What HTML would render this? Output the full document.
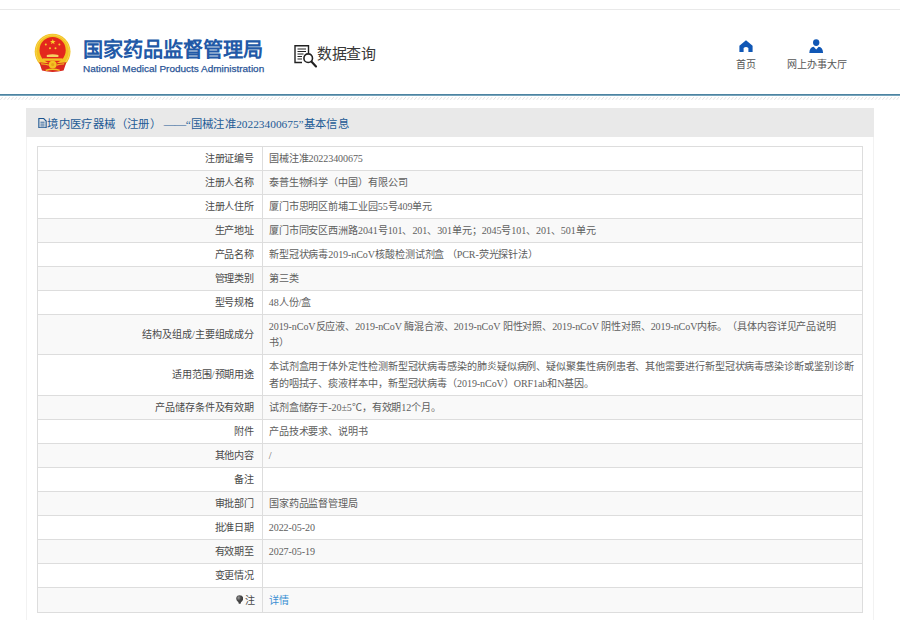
<!DOCTYPE html>
<html lang="zh-CN">
<head>
<meta charset="utf-8">
<title>国家药品监督管理局 数据查询</title>
<style>
*{box-sizing:border-box;margin:0;padding:0}
html,body{width:900px;height:620px;overflow:hidden;background:#fff}
body{font-family:"Liberation Sans",sans-serif;color:#333;position:relative;text-spacing-trim:space-all}
.topline{position:absolute;left:0;top:9.2px;width:900px;height:1px;background:#e9e9e9}
.logo{position:absolute;left:34px;top:33px;width:37px;height:40px}
.title-cn{position:absolute;left:83px;top:37px;font-size:20.2px;font-weight:bold;color:#2259a7;letter-spacing:0.05px;line-height:26px;white-space:nowrap}
.title-en{position:absolute;left:83px;top:62.5px;font-size:9.97px;color:#2a5597;-webkit-text-stroke:0.25px #2a5597;line-height:12px;white-space:nowrap}
.dq{position:absolute;left:294px;top:45px;width:24px;height:23px}
.dq-t{position:absolute;left:317px;top:43px;font-size:15px;color:#383838;line-height:22px;white-space:nowrap;letter-spacing:-0.4px}
.abs{position:absolute;display:block}
.navt{position:absolute;top:57.8px;text-align:center;font-size:10px;line-height:14px;color:#555;white-space:nowrap}
.blueline{position:absolute;left:0;top:94px;width:900px;height:2.4px;background:linear-gradient(#4a819f 0,#4f87a5 55%,#a9c8d6 100%)}
.hatch{position:absolute;left:0;top:96.6px;width:900px;height:3px;display:block}
.panel{position:absolute;left:25.6px;top:108px;width:848.7px;height:520px;background:#fff;border-left:1px solid #f2f2f2;border-right:1px solid #f2f2f2}
.phead{position:absolute;left:-0.6px;top:0;width:848.3px;height:28.8px;background:#e9e9e9}
.phead .ico{position:absolute;left:11.6px;top:9.8px;width:9px;height:10.3px}
.phead .t{position:absolute;left:21.4px;top:8px;font-family:"Liberation Serif",sans-serif;font-size:11.36px;letter-spacing:0.36px;line-height:16px;color:#1d5b96;white-space:nowrap}
.phead .t i{font-style:normal;letter-spacing:0}
.phead .t b{font-weight:normal;margin-left:2.8px;letter-spacing:-0.45px}
table{position:absolute;left:37px;top:146px;width:826px;table-layout:fixed;border-collapse:collapse;font-family:"Liberation Serif",sans-serif;font-size:10.07px;letter-spacing:-0.09px;line-height:16.4px;text-spacing-trim:space-all}
td{border:1px solid #ddd;padding:3.9px 7.3px 2.7px 5.3px;vertical-align:middle;white-space:nowrap}
td.l{width:224.5px;text-align:right;color:#4a4a4a}
td.v{color:#5e5e5e;text-align:left;padding-left:6.3px}
tr.r8 td{padding-top:3.7px;padding-bottom:2.5px}
tr.r9 td{padding-top:4.3px;padding-bottom:2.9px}
tr.r18 td{padding-top:5.3px;padding-bottom:2.3px}
tr.r18 td.l{padding-right:6.3px}
tr:nth-child(even) td{background:#f9f9f9}
a{color:#3a8fd3;text-decoration:none}
</style>
</head>
<body>
<div class="topline"></div>

<svg class="logo" viewBox="0 0 37 40">
  <circle cx="18.6" cy="18.6" r="17.9" fill="#f3c222"/>
  <circle cx="18.6" cy="18.6" r="16.6" fill="none" stroke="#f8d95a" stroke-width="0.8"/>
  <ellipse cx="18.6" cy="17.2" rx="13.1" ry="13.2" fill="#e3271d"/>
  <path d="M18.8 5.9 l0.75 2.0 2.1 0.05 -1.65 1.3 .6 2.05 -1.8 -1.2 -1.8 1.2 .6 -2.05 -1.65 -1.3 2.1 -0.05z" fill="#f7d02c"/>
  <circle cx="11.8" cy="11.4" r="1" fill="#f7d02c"/><circle cx="25.4" cy="11.4" r="1" fill="#f7d02c"/>
  <circle cx="16" cy="15.2" r="1" fill="#f7d02c"/><circle cx="21.5" cy="15.2" r="1" fill="#f7d02c"/>
  <path d="M12.8 24.1 V22 Q18.6 20.3 24.4 22 V24.1Z" fill="#f5d262"/>
  <rect x="8.8" y="25.4" width="19.6" height="2.4" fill="#f3c222"/>
  <path d="M5.2 29.2 Q18.6 31.5 32.4 29.2 L29.6 37.6 Q18.6 40.2 8 37.6Z" fill="#d9281f"/>
  <path d="M7 30.2 Q12 30.4 14.8 31.6 L14.8 32.8 Q11 31.4 7.4 31.6Z M30.4 30.2 Q25.4 30.4 22.6 31.6 L22.6 32.8 Q26.4 31.4 30 31.6Z" fill="#f3c222"/>
  <circle cx="18.7" cy="31.6" r="3.9" fill="#f3c222"/>
  <circle cx="18.7" cy="31.6" r="1.6" fill="#e8a21a"/>
  <path d="M11.4 36.8 Q18.6 34.2 26 36.8 L25.4 38 Q18.6 35.8 12 38Z" fill="#f3c222"/>
</svg>
<div class="title-cn">国家药品监督管理局</div>
<div class="title-en">National Medical Products Administration</div>

<svg class="dq" viewBox="0 0 24 23" fill="none" stroke="#222" stroke-width="1.4">
  <path d="M8 17.5 H1 V0.8 H14.5 V8"/>
  <path d="M3.5 4 H12 M3.5 6.5 H12 M3.5 9 H9.5 M3.5 11.5 H8 M3.5 14 H8" stroke-width="1"/>
  <circle cx="14.2" cy="13.2" r="4.3" stroke-width="1.6"/>
  <path d="M17.4 16.6 L22 21.4" stroke-width="2.2" stroke-linecap="round"/>
</svg>
<div class="dq-t">数据查询</div>

<svg class="abs" style="left:738.6px;top:40px" width="14" height="12.5" viewBox="0 0 14 13" preserveAspectRatio="none"><path d="M7 0.3 L0.4 6 V12.6 H4.6 V8.4 Q7 6.2 9.4 8.4 V12.6 H13.6 V6 Z" fill="#1057b5"/></svg>
<div class="navt" style="left:725.5px;width:40px">首页</div>
<svg class="abs" style="left:809.2px;top:39px" width="14.4" height="14.2" viewBox="0 0 14 13" preserveAspectRatio="none"><circle cx="7" cy="3.3" r="3.1" fill="#1057b5"/><path d="M0.3 12.8 Q0.6 7.6 4.6 7.2 L7 9.6 L9.4 7.2 Q13.4 7.6 13.7 12.8Z" fill="#1057b5"/></svg>
<div class="navt" style="left:776.5px;width:80px">网上办事大厅</div>

<div class="blueline"></div>
<svg class="hatch" viewBox="0 0 900 3" preserveAspectRatio="none"><defs><pattern id="hp" width="3.6" height="3" patternUnits="userSpaceOnUse"><path d="M0.3 2.9 L2.6 0.1" stroke="#dcdcdc" stroke-width="0.9" fill="none"/></pattern></defs><rect width="900" height="3" fill="url(#hp)"/></svg>

<div class="panel">
  <div class="phead">
    <svg class="ico" viewBox="0 0 9 11" fill="none" stroke="#1a5490" stroke-width="1.15"><path d="M0.6 0.6 H5.8 L8.4 3.2 V10.4 H0.6Z"/><path d="M2.3 4.5 H6.7 M2.3 6.5 H6.7 M2.3 8.5 H6.7" stroke-width="0.9"/></svg>
    <div class="t">境内医疗器械（注册）<b>——</b><i>“</i>国械注准<i>20223400675”</i>基本信息</div>
  </div>
</div>

<table>
<tr><td class="l">注册证编号</td><td class="v">国械注准20223400675</td></tr>
<tr><td class="l">注册人名称</td><td class="v">泰普生物科学（中国）有限公司</td></tr>
<tr><td class="l">注册人住所</td><td class="v">厦门市思明区前埔工业园55号409单元</td></tr>
<tr><td class="l">生产地址</td><td class="v">厦门市同安区西洲路2041号101、201、301单元；2045号101、201、501单元</td></tr>
<tr><td class="l">产品名称</td><td class="v">新型冠状病毒2019-nCoV核酸检测试剂盒 （PCR-荧光探针法）</td></tr>
<tr><td class="l">管理类别</td><td class="v">第三类</td></tr>
<tr><td class="l">型号规格</td><td class="v">48人份/盒</td></tr>
<tr class="r8"><td class="l">结构及组成/主要组成成分</td><td class="v">2019-nCoV反应液、2019-nCoV 酶混合液、2019-nCoV 阳性对照、2019-nCoV 阴性对照、2019-nCoV内标。（具体内容详见产品说明<br>书）</td></tr>
<tr class="r9"><td class="l">适用范围/预期用途</td><td class="v">本试剂盒用于体外定性检测新型冠状病毒感染的肺炎疑似病例、疑似聚集性病例患者、其他需要进行新型冠状病毒感染诊断或鉴别诊断<br>者的咽拭子、痰液样本中，新型冠状病毒（2019-nCoV）ORF1ab和N基因。</td></tr>
<tr><td class="l">产品储存条件及有效期</td><td class="v">试剂盒储存于-20±5℃，有效期12个月。</td></tr>
<tr><td class="l">附件</td><td class="v">产品技术要求、说明书</td></tr>
<tr><td class="l">其他内容</td><td class="v">/</td></tr>
<tr><td class="l">备注</td><td class="v"></td></tr>
<tr><td class="l">审批部门</td><td class="v">国家药品监督管理局</td></tr>
<tr><td class="l">批准日期</td><td class="v">2022-05-20</td></tr>
<tr><td class="l">有效期至</td><td class="v">2027-05-19</td></tr>
<tr><td class="l">变更情况</td><td class="v"></td></tr>
<tr class="r18"><td class="l"><svg width="7.4" height="9" viewBox="0 0 7.4 9" style="vertical-align:0px;margin-right:1.8px"><defs><radialGradient id="bg" cx="0.35" cy="0.3" r="0.7"><stop offset="0" stop-color="#9a9a9a"/><stop offset="0.45" stop-color="#4a4a4a"/><stop offset="1" stop-color="#3a3a3a"/></radialGradient></defs><path d="M3.7 0.2 A3.5 3.5 0 0 1 7.2 3.7 Q7.2 5.6 5 7.2 L4.6 8.8 H2.8 L2.4 7.2 Q0.2 5.6 0.2 3.7 A3.5 3.5 0 0 1 3.7 0.2Z" fill="url(#bg)"/></svg>注</td><td class="v"><a>详情</a></td></tr>
</table>
</body>
</html>
